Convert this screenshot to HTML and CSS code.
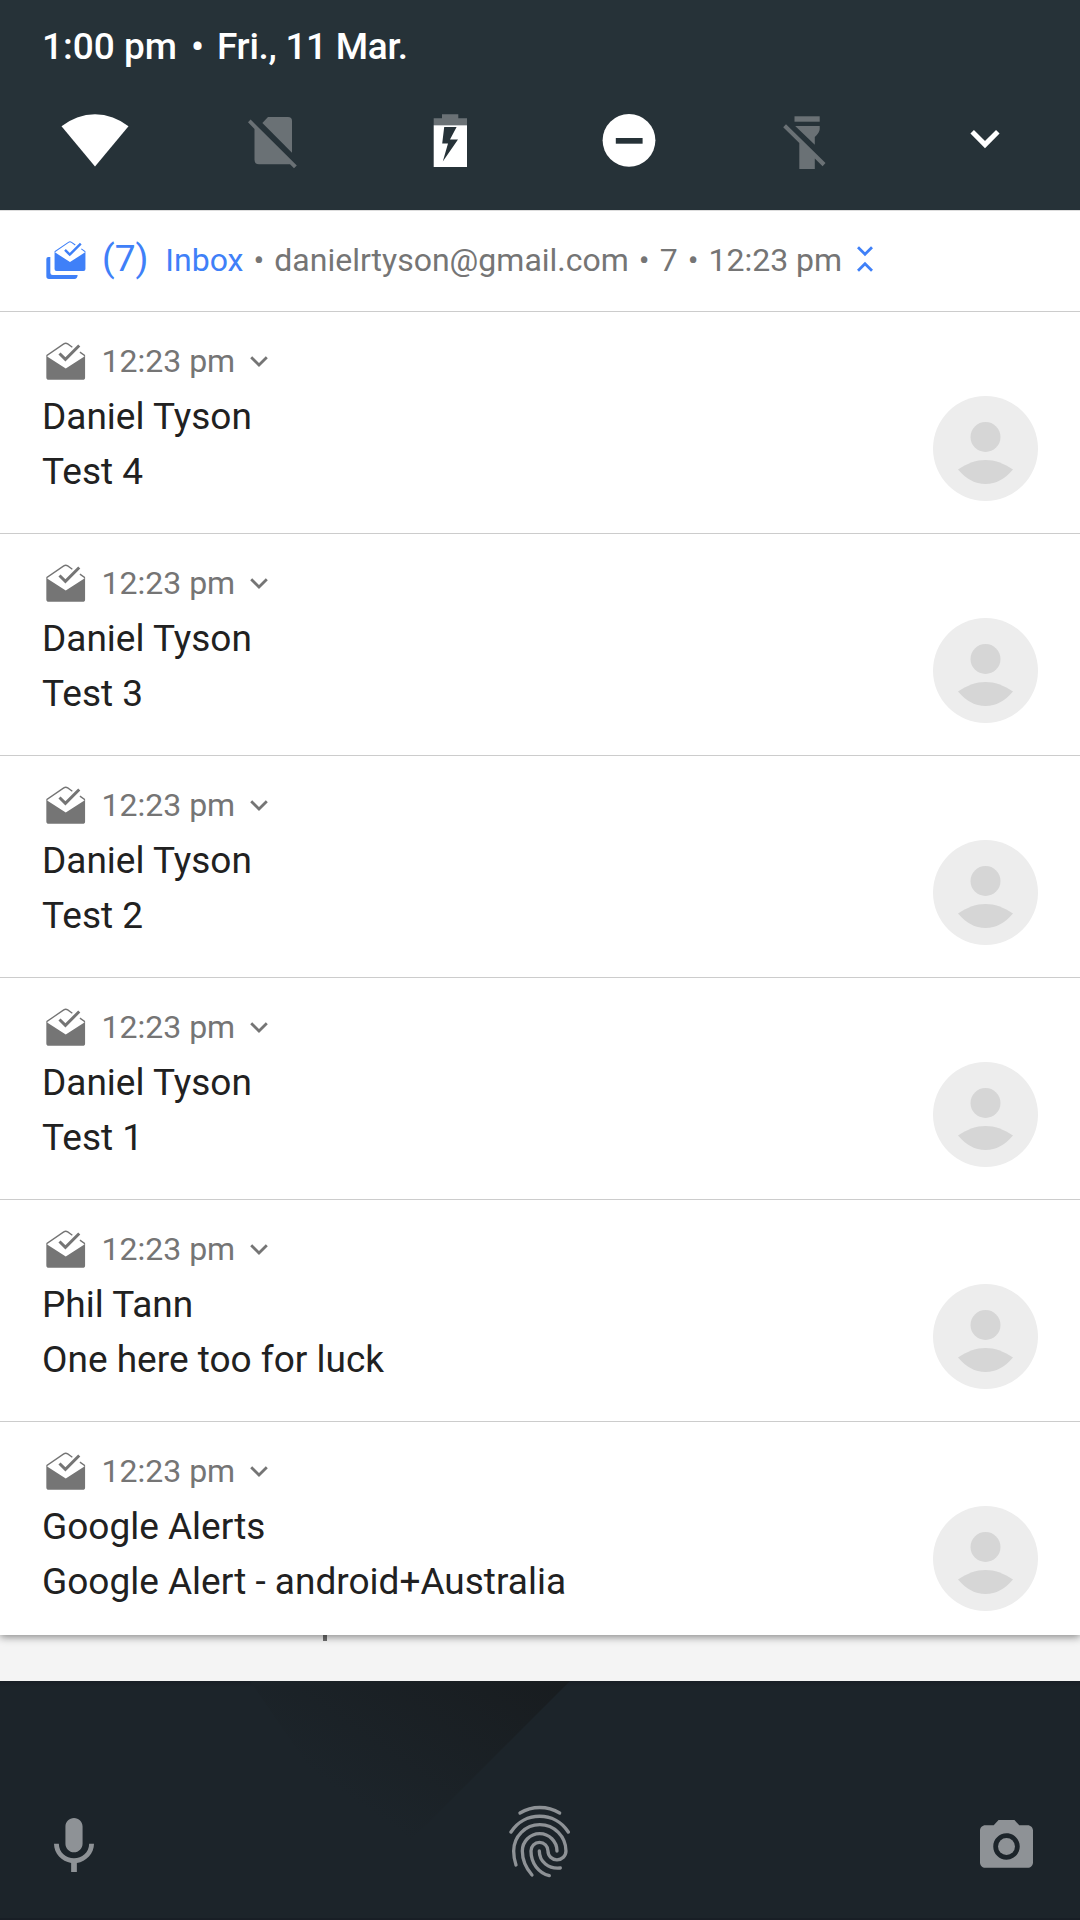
FILE: index.html
```html
<!DOCTYPE html>
<html lang="en">
<head>
  <meta charset="UTF-8">
  <title>Notifications</title>
  <link rel="stylesheet" href="styles.css">
</head>
<body>

  <!-- shared icons -->
  <svg class="defs" width="0" height="0">
    <symbol id="mail" viewBox="0 0 120 114">
      <path d="M1 42L60 80l59-38v64q0 8-8 8H9q-8 0-8-8z" fill="currentColor"/>
      <path d="M3 43V40L54 5q6-4 12 0l14 10M103 30l14 10v3" fill="none" stroke="currentColor" stroke-width="4"/>
      <path d="M41 34l18 18 42-42" fill="none" stroke="currentColor" stroke-width="9"/>
    </symbol>
    <symbol id="down" viewBox="0 0 18 11">
      <path d="M1.2 1.2L9 9l7.8-7.8" fill="none" stroke="currentColor" stroke-width="2.8"/>
    </symbol>
    <symbol id="person" viewBox="0 0 105 105">
      <circle cx="52.5" cy="52.5" r="52.5" fill="#ededed"/>
      <circle cx="52.5" cy="41" r="15" fill="#d6d6d6"/>
      <path d="M25 73.5C35 67 43 64 52.5 64S70 67 80 73.5C72 83 63 88 52.5 88S33 83 25 73.5z" fill="#d6d6d6"/>
    </symbol>
  </svg>

  <header>
    <div class="clock"><span>1:00 pm</span><span class="sep">•</span><span class="date">Fri., 11 Mar.</span></div>
    <nav class="tiles">
      <svg viewBox="0 0 72 72"><path d="M36 62.5L2.5 22.3A52.8 52.8 0 0 1 69.5 22.3z" fill="#fff"/></svg>
      <svg class="off" viewBox="0 0 72 72">
        <path d="M25.4 19L31 13H51q4 0 4 4V48.7z"/>
        <path d="M13.6 15.5L59.8 61.5 57 64.2 53 60.3H22q-4.5 0-4.5-4.5V25L11 18.3z"/>
      </svg>
      <svg viewBox="0 0 72 72">
        <path d="M27 10.3H43.3V14.3H52V21.3H18.7V14.3H27z" fill="#6a7175"/>
        <path d="M18.7 21.3H52V63H18.7z" fill="#fff"/>
        <path d="M29.2 23H41.6L35 35.5H43L27.8 57.5 33 39.5H27.2z" fill="#263238"/>
      </svg>
      <svg viewBox="0 0 72 72"><circle cx="36" cy="36.3" r="26.4" fill="#fff"/><path d="M22.8 34h26.8v5.7H22.8z" fill="#263238"/></svg>
      <svg class="off" viewBox="0 0 72 72">
        <path d="M23.5 12.3h25.2v5.4H23.5z"/>
        <path d="M24.2 22H48.7V25Q48.7 28.5 43.8 33V40.8z"/>
        <path d="M15 20.3L54.5 59 51.6 62.2 43.8 54.5V65H28.3V39L12.2 23.2z"/>
      </svg>
      <svg viewBox="0 0 72 72"><path d="M23.2 27.8L36 40.6 48.8 27.8" fill="none" stroke="#fff" stroke-width="5"/></svg>
    </nav>
  </header>

  <main>
    <div class="summary">
      <svg class="stack" viewBox="0 0 120 114">
        <path d="M1 54q0-6 6-6h6v47q0 7 7 7h75q-1 12-10 12H9q-8 0-8-8z" fill="currentColor"/>
        <use href="#mail" x="24.5" y="0" width="95" height="90"/>
      </svg>
      <span class="count">(7)</span>
      <span class="app">Inbox</span>
      <span class="dot">•</span>
      <span>danielrtyson@gmail.com</span>
      <span class="dot">•</span>
      <span>7</span>
      <span class="dot">•</span>
      <span>12:23 pm</span>
      <svg class="collapse" viewBox="0 0 16 26"><path d="M1 1.2l7 7 7-7M1 24.8l7-7 7 7" fill="none" stroke="currentColor" stroke-width="2.8"/></svg>
    </div>

    <section class="mail">
      <div>
        <p class="meta"><svg class="icon"><use href="#mail"/></svg><span>12:23 pm</span><svg class="arrow"><use href="#down"/></svg></p>
        <p>Daniel Tyson</p>
        <p>Test 4</p>
      </div>
      <svg class="avatar"><use href="#person"/></svg>
    </section>

    <section class="mail">
      <div>
        <p class="meta"><svg class="icon"><use href="#mail"/></svg><span>12:23 pm</span><svg class="arrow"><use href="#down"/></svg></p>
        <p>Daniel Tyson</p>
        <p>Test 3</p>
      </div>
      <svg class="avatar"><use href="#person"/></svg>
    </section>

    <section class="mail">
      <div>
        <p class="meta"><svg class="icon"><use href="#mail"/></svg><span>12:23 pm</span><svg class="arrow"><use href="#down"/></svg></p>
        <p>Daniel Tyson</p>
        <p>Test 2</p>
      </div>
      <svg class="avatar"><use href="#person"/></svg>
    </section>

    <section class="mail">
      <div>
        <p class="meta"><svg class="icon"><use href="#mail"/></svg><span>12:23 pm</span><svg class="arrow"><use href="#down"/></svg></p>
        <p>Daniel Tyson</p>
        <p>Test 1</p>
      </div>
      <svg class="avatar"><use href="#person"/></svg>
    </section>

    <section class="mail">
      <div>
        <p class="meta"><svg class="icon"><use href="#mail"/></svg><span>12:23 pm</span><svg class="arrow"><use href="#down"/></svg></p>
        <p>Phil Tann</p>
        <p>One here too for luck</p>
      </div>
      <svg class="avatar"><use href="#person"/></svg>
    </section>

    <section class="mail">
      <div>
        <p class="meta"><svg class="icon"><use href="#mail"/></svg><span>12:23 pm</span><svg class="arrow"><use href="#down"/></svg></p>
        <p>Google Alerts</p>
        <p>Google Alert - android+Australia</p>
      </div>
      <svg class="avatar"><use href="#person"/></svg>
    </section>
  </main>

  <!-- next notification, mostly hidden under the list -->
  <div class="peek"></div>

  <footer>
    <svg class="shade" viewBox="0 0 330 200">
      <defs>
        <linearGradient id="fade" x1="1" y1="0" x2="0.3" y2="0.6">
          <stop offset="0" stop-color="#181c1f"/>
          <stop offset="1" stop-color="#1c242a"/>
        </linearGradient>
      </defs>
      <path d="M0 0H320L130 190z" fill="url(#fade)"/>
    </svg>
    <svg class="mic" viewBox="5 2 14 19">
      <path d="M12 14c1.66 0 3-1.34 3-3V5c0-1.66-1.34-3-3-3S9 3.34 9 5v6c0 1.66 1.34 3 3 3zm5.3-3c0 3-2.54 5.1-5.3 5.1S6.7 14 6.7 11H5c0 3.41 2.72 6.23 6 6.72V21h2v-3.28c3.28-.48 6-3.3 6-6.72h-1.7z"/>
    </svg>
    <svg class="finger" viewBox="149 72 184 222">
      <path d="M182 99C218 77 265 77 301 99"/>
      <path d="M155 156C195 93 287 93 327 156"/>
      <path d="M170 255C165 240 163 227 163 213A78.5 79 0 0 1 320 213A27 26.5 0 0 1 266 213A25.5 26 0 0 0 215 213C215 250 238 279 270 287"/>
      <path d="M218 285C198 262 189 240 189 213A52 52 0 0 1 293 213"/>
      <path d="M240 213C240 245 268 268 303 264"/>
    </svg>
    <svg class="camera" viewBox="2 2 20 18">
      <circle cx="12" cy="12" r="3.2"/>
      <path d="M9 2L7.17 4H4c-1.1 0-2 .9-2 2v12c0 1.1.9 2 2 2h16c1.1 0 2-.9 2-2V6c0-1.1-.9-2-2-2h-3.17L15 2H9zm3 15c-2.76 0-5-2.24-5-5s2.24-5 5-5 5 2.24 5 5-2.24 5-5 5z"/>
    </svg>
  </footer>

</body>
</html>
```
FILE: styles.css
```css
body {
  font-family: Roboto, sans-serif;
  background-color: #1c242a;
  color: #212121;
  margin: 0;
  width: 1080px;
  height: 1920px;
  overflow: hidden;
}

p {
  margin: 0;
}

svg {
  display: block;
  flex: none;
}

.defs {
  position: absolute;
}

header {
  position: relative;
  z-index: 1;
  box-sizing: border-box;
  height: 210px;
  padding-top: 25px;
  background-color: #263238;
  color: white;
}

.clock {
  display: flex;
  height: 44px;
  padding-left: 42px;
  font-size: 37px;
  font-weight: 500;
  line-height: 44px;
}

.sep {
  margin: 0 13px 0 14px;
}

.date {
  letter-spacing: -0.3px;
}

.tiles {
  display: grid;
  grid-template-columns: repeat(6, 178px);
  justify-content: center;
  justify-items: center;
  padding-top: 35px;
}

.tiles svg {
  width: 72px;
  height: 72px;
}

.off {
  fill: #6a7175;
}

main {
  position: relative;
  height: 1425px;
  background-color: white;
  box-shadow: 0 2px 8px rgba(0,0,0,0.45);
}

.summary {
  box-sizing: border-box;
  display: flex;
  align-items: baseline;
  height: 101px;
  padding: 26px 0 0 46px;
  border-top: 1px solid #ddd;
  color: #757575;
  font-size: 32px;
  line-height: 44px;
}

.stack {
  width: 40px;
  height: 38px;
  align-self: flex-start;
  margin-top: 4px;
  color: #3f80f8;
}

.count {
  margin: 0 17px 0 16px;
  font-size: 37px;
  color: #3f80f8;
}

.app {
  color: #3f80f8;
}

.dot {
  margin: 0 10px;
}

.collapse {
  width: 16px;
  height: 26px;
  align-self: flex-start;
  margin: 9px 0 0 15px;
  color: #3f80f8;
}

.mail {
  box-sizing: border-box;
  display: flex;
  justify-content: space-between;
  height: 222px;
  padding: 21px 42px 0;
  border-top: 1px solid #ccc;
  font-size: 37px;
  line-height: 55px;
}

.meta {
  display: flex;
  align-items: center;
  height: 56px;
  padding-left: 4px;
  color: #757575;
  font-size: 32px;
  line-height: 56px;
}

.icon {
  width: 39.5px;
  height: 38px;
  margin-right: 16px;
}

.arrow {
  width: 18px;
  height: 11px;
  margin-left: 15px;
}

.avatar {
  width: 105px;
  height: 105px;
  margin-top: 63px;
}

.peek {
  height: 46px;
  background: linear-gradient(#6e6e6e, #6e6e6e) 323px 0 / 4px 6px no-repeat #f4f4f4;
}

footer {
  position: relative;
  box-sizing: border-box;
  display: flex;
  justify-content: space-between;
  align-items: flex-start;
  height: 239px;
  padding: 123px 47px 0 54px;
  border-bottom: 2px solid #181e25;
  background: linear-gradient(#181e25, #1c242a 6px);
  fill: #8e9296;
}

/* soft fold of the wallpaper */
.shade {
  position: absolute;
  left: 250px;
  top: 0;
  width: 330px;
  height: 200px;
}

.mic {
  width: 40px;
  height: 54.3px;
  margin-top: 14px;
}

.finger {
  position: relative;
  left: 3px;
  width: 61.3px;
  height: 74px;
  fill: none;
  stroke: #8e9296;
  stroke-width: 10;
  stroke-linecap: round;
}

.camera {
  width: 53px;
  height: 47.7px;
  margin-top: 16px;
}
```
